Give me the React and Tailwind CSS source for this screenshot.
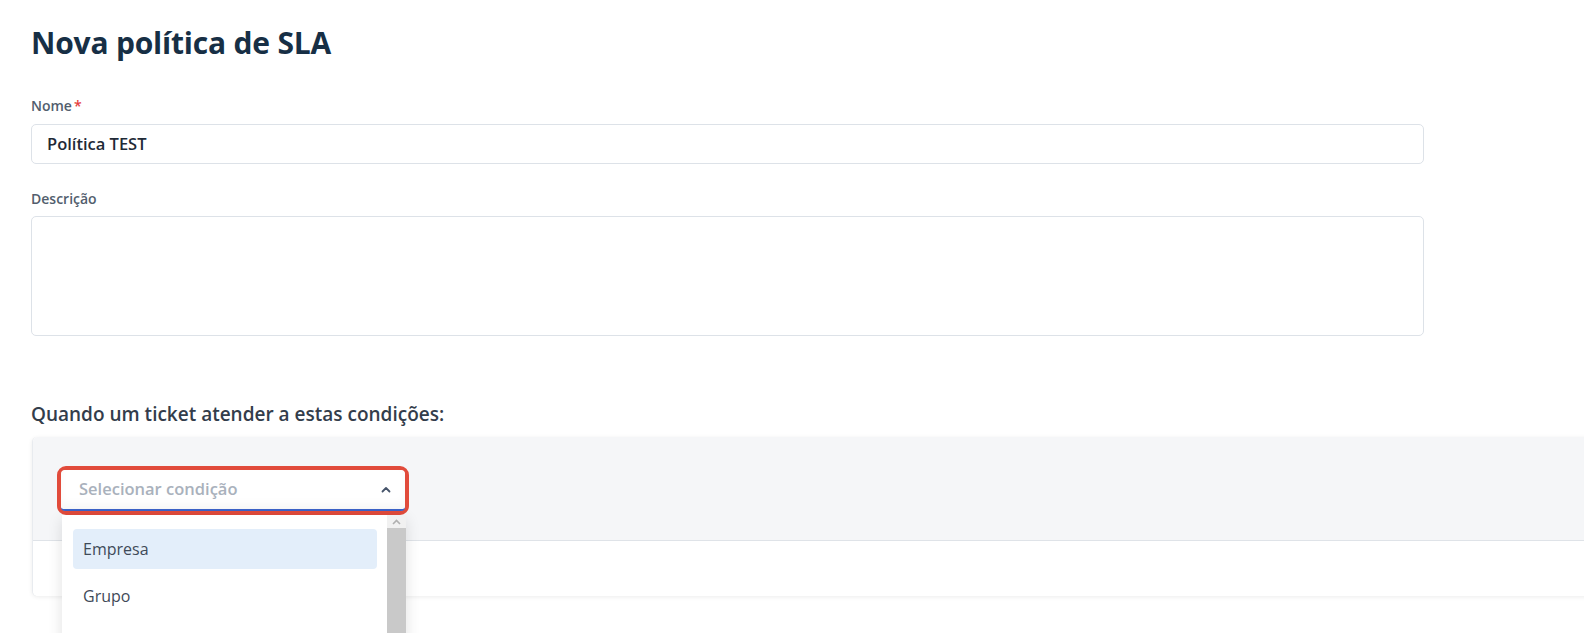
import React from "react";

export default function App() {
  return (
    <div className="relative h-[633px] w-full overflow-hidden bg-white font-['Open_Sans',sans-serif]">
      <div className="pl-[31px] pt-[22px]">
        <h1 className="text-[30px] font-bold leading-[42px] text-[#172f45] tracking-[-0.2px]">
          Nova política de SLA
        </h1>

        <div className="w-[1393px]">
          <label className="mt-[32px] block text-[14px] font-semibold leading-[20px] text-[#525e6d]">
            Nome<span className="ml-[2px] text-[#e53e3e]">*</span>
          </label>
          <div className="mt-[8px] flex h-[40px] items-center rounded-[5px] border border-[#dde2e8] bg-white px-[15px] text-[16.5px] font-semibold text-[#1f2a37]">
            Política TEST
          </div>

          <label className="mt-[25px] block text-[14px] font-semibold leading-[20px] text-[#525e6d]">
            Descrição
          </label>
          <div className="mt-[7px] h-[120px] rounded-[5px] border border-[#dde2e8] bg-white" />
        </div>

        <h2 className="mt-[65px] text-[19px] font-semibold leading-[26px] text-[#333d4b]">
          Quando um ticket atender a estas condições:
        </h2>

        <div className="relative mt-[10px] ml-[1px] w-[1600px] rounded-[5px] border-l border-[#e8ebef] bg-white shadow-[0_1px_4px_rgba(0,0,0,0.08)]">
          <div className="h-[104px] rounded-tl-[5px] border-b border-[#dfe3e8] bg-[#f5f6f8] pl-[24px] pt-[29px]">
            <div className="relative w-[352px]">
              <div className="rounded-[9px] border-[4px] border-[#e14b3b] p-0">
                <div className="flex h-[41px] items-center justify-between rounded-[4px] border-b-[2px] border-[#3b63c9] bg-white pl-[18px] pr-[14px] shadow-[inset_0_-6px_8px_rgba(0,0,0,0.03)]">
                  <span className="text-[16.5px] font-semibold text-[#a9b1bc]">Selecionar condição</span>
                  <svg width="10" height="7" viewBox="0 0 10 7" fill="none">
                    <path d="M1.5 5.5 L5 2 L8.5 5.5" stroke="#46546a" strokeWidth="1.8" strokeLinecap="round" strokeLinejoin="round" />
                  </svg>
                </div>
              </div>
              <div className="absolute left-[5px] top-[49px] z-10 h-[200px] w-[344px] bg-white shadow-[0_4px_14px_rgba(0,0,0,0.12)]">
                <div className="flex h-full">
                  <div className="flex-1 pl-[11px] pr-[10px] pt-[14px]">
                    <div className="flex h-[40px] items-center rounded-[4px] bg-[#e3eefa] px-[10px] text-[16px] text-[#3f4a58]">
                      Empresa
                    </div>
                    <div className="flex h-[54px] items-center px-[10px] text-[16px] text-[#3f4a58]">
                      Grupo
                    </div>
                  </div>
                  <div className="flex w-[19px] flex-col bg-[#f1f1f1]">
                    <div className="flex h-[13px] items-center justify-center">
                      <svg width="9" height="6" viewBox="0 0 9 6" fill="none">
                        <path d="M1 5 L4.5 1.5 L8 5" stroke="#b0b0b0" strokeWidth="1.6" />
                      </svg>
                    </div>
                    <div className="flex-1 bg-[#c9c9c9]" />
                  </div>
                </div>
              </div>
            </div>
          </div>
          <div className="h-[55px] rounded-bl-[5px] bg-white" />
        </div>
      </div>
    </div>
  );
}
